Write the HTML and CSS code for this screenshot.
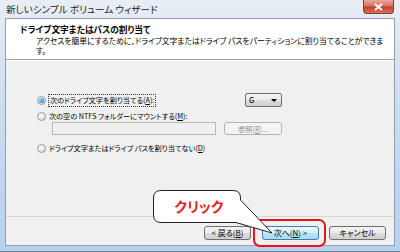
FILE: index.html
```html
<!DOCTYPE html>
<html lang="ja">
<head>
  <meta charset="UTF-8">
  <meta name="viewport" content="width=device-width, initial-scale=1.0">
  <title>新しいシンプル ボリューム ウィザード</title>
  <link rel="stylesheet" href="styles.css">
</head>
<body>
  <div class="window">
    <div class="titlebar">
      <span class="title">新しいシンプル ボリューム ウィザード</span>
      <span class="close">
        <svg width="9" height="8" viewBox="0 0 9 8"><path d="M1 1 L8 7 M8 1 L1 7" stroke="#fff" stroke-width="2"/></svg>
      </span>
    </div>
    <div class="client">
      <div class="header">
        <div class="head-title">ドライブ文字またはパスの割り当て</div>
        <div class="head-desc">アクセスを簡単にするために、ドライブ文字またはドライブ パスをパーティションに割り当てることができま<br>す。</div>
      </div>
      <div class="content">
        <div class="row row-a">
          <div class="opt"><span class="radio checked"></span><span class="focus">次のドライブ文字を割り当てる(<u>A</u>):</span></div>
          <div class="combo"><span>G</span><span class="arrow"></span></div>
        </div>
        <div class="row row-m">
          <div class="opt"><span class="radio"></span><span>次の空の NTFS フォルダーにマウントする(<u>M</u>):</span></div>
        </div>
        <div class="row row-path">
          <div class="path"></div>
          <div class="btn browse">参照(<u>R</u>)...</div>
        </div>
        <div class="row row-d">
          <div class="opt"><span class="radio"></span><span>ドライブ文字またはドライブ パスを割り当てない(<u>D</u>)</span></div>
        </div>
      </div>
      <div class="footer">
        <div class="btn back">&lt; 戻る(<u>B</u>)</div>
        <div class="btn next">次へ(<u>N</u>) &gt;</div>
        <div class="btn cancel">キャンセル</div>
      </div>
    </div>

    <div class="highlight"></div>
    <svg class="callout" width="130" height="52" viewBox="0 0 130 52">
      <path d="M11 4.5 H83 Q90.5 4.5 90.5 12 V14 L122 47 L86 36.5 H11 Q3.5 36.5 3.5 29 V12 Q3.5 4.5 11 4.5 Z" fill="#fff" stroke="#222" stroke-width="1"/>
      <text x="49" y="26" text-anchor="middle" class="callout-text">クリック</text>
    </svg>
  </div>
</body>
</html>
```

FILE: styles.css
```css
*, *::before, *::after {
  margin: 0;
  padding: 0;
  box-sizing: border-box;
}

body {
  width: 400px;
  height: 252px;
  overflow: hidden;
  font-family: "Noto Sans CJK JP", "Noto Sans", sans-serif;
  font-size: 8px;
  line-height: 12px;
  font-feature-settings: "palt";
  color: #000;
}

u {
  text-decoration: underline;
}

/* window frame */
.window {
  position: relative;
  height: 252px;
  display: flex;
  flex-direction: column;
  padding: 0 5px 5px;
  background: linear-gradient(#e9eef5, #d6e3f1 25%, #bfd6ef 70%, #b6d0ee);
  border-bottom: 1px solid #6e7f94;
}

.titlebar {
  height: 18px;
  display: flex;
  align-items: flex-start;
}

.title {
  padding: 3px 0 0 1px;
  font-size: 9.6px;
  line-height: 12px;
  color: #1b1b1b;
}

.close {
  margin-left: auto;
  margin-right: 1px;
  width: 31px;
  height: 14px;
  display: flex;
  align-items: center;
  justify-content: center;
  border: 1px solid #8a3b33;
  border-top: 0;
  border-radius: 0 0 4px 4px;
  background: linear-gradient(#e9a99d, #d8725f 45%, #c4412e 55%, #d5735c);
}

.client {
  flex: 1;
  display: flex;
  flex-direction: column;
  border: 1px solid #8f9fb2;
  background: #f0f0f0;
}

/* header */
.header {
  height: 41px;
  padding: 5px 0 0 14px;
  background: #fff;
  border-bottom: 1px solid #a0a0a0;
}

.head-title {
  font-weight: bold;
  font-size: 8.7px;
  line-height: 12px;
}

.head-desc {
  padding-left: 16px;
  font-size: 7.8px;
  line-height: 10px;
  white-space: nowrap;
}

/* options */
.content {
  flex: 1;
  padding: 32px 0 0 31px;
  border-top: 1px solid #fff;
  font-size: 7.2px;
}

.row {
  display: flex;
  align-items: center;
}

.row-a {
  height: 14px;
}

.row-m {
  height: 12px;
  margin-top: 3px;
}

.row-path {
  height: 13px;
  padding-left: 15px;
  gap: 8px;
}

.row-d {
  height: 12px;
  margin-top: 7px;
}

.opt {
  display: flex;
  align-items: center;
  gap: 2px;
  white-space: nowrap;
}

.row-a .opt {
  width: 208px;
}

.radio {
  width: 9px;
  height: 9px;
  margin-right: 1px;
  border: 1px solid #9a9a9a;
  border-radius: 50%;
  background: radial-gradient(circle at 40% 35%, #fbfbfb, #dadada);
  display: flex;
  align-items: center;
  justify-content: center;
}

.radio.checked::after {
  content: "";
  width: 5px;
  height: 5px;
  border-radius: 50%;
  background: radial-gradient(circle at 35% 30%, #8cd1f7, #1f6ec4);
}

.focus {
  outline: 1px dotted #333;
  outline-offset: 0;
  padding: 0 1px;
  line-height: 11px;
}

.combo {
  width: 37px;
  height: 14px;
  display: flex;
  align-items: center;
  justify-content: space-between;
  padding: 0 4px 0 3px;
  border: 1px solid #707070;
  border-radius: 2px;
  font-size: 8px;
  background: linear-gradient(#f3f3f3, #ebebeb 50%, #dcdcdc 50%, #d0d0d0);
}

.arrow {
  width: 0;
  height: 0;
  border-left: 3px solid transparent;
  border-right: 3px solid transparent;
  border-top: 3px solid #000;
}

.path {
  width: 164px;
  height: 13px;
  border: 1px solid #b5b9bd;
  background: #f0f0f0;
}

/* buttons */
.btn {
  height: 14px;
  display: flex;
  align-items: center;
  justify-content: center;
  border: 1px solid #707070;
  border-radius: 3px;
  background: linear-gradient(#f2f2f2, #ebebeb 50%, #dddddd 50%, #cfcfcf);
  white-space: nowrap;
}

.browse {
  width: 58px;
  height: 13px;
  color: #8d8d8d;
  border-color: #b4b4b4;
  background: #f4f4f4;
}

.footer {
  height: 29px;
  display: flex;
  justify-content: flex-end;
  align-items: flex-start;
  padding: 9px 8px 0 0;
  border-top: 1px solid #d5d5d5;
}

.back {
  width: 47px;
}

.next {
  width: 57px;
  margin-left: 11px;
  border-color: #3c7fb1;
  background: linear-gradient(#eaf6fd, #d9f0fc 50%, #bee6fd 50%, #a7d9f5);
}

.cancel {
  width: 57px;
  margin-left: 10px;
}

/* annotation overlay */
.highlight {
  position: absolute;
  left: 253px;
  top: 219px;
  width: 73px;
  height: 28px;
  border: 2px solid #e8141b;
  border-radius: 7px;
}

.callout {
  position: absolute;
  left: 150px;
  top: 186px;
}

.callout-text {
  font-family: "Noto Sans CJK JP", sans-serif;
  font-weight: bold;
  font-size: 14px;
  fill: #e8231e;
}
```
